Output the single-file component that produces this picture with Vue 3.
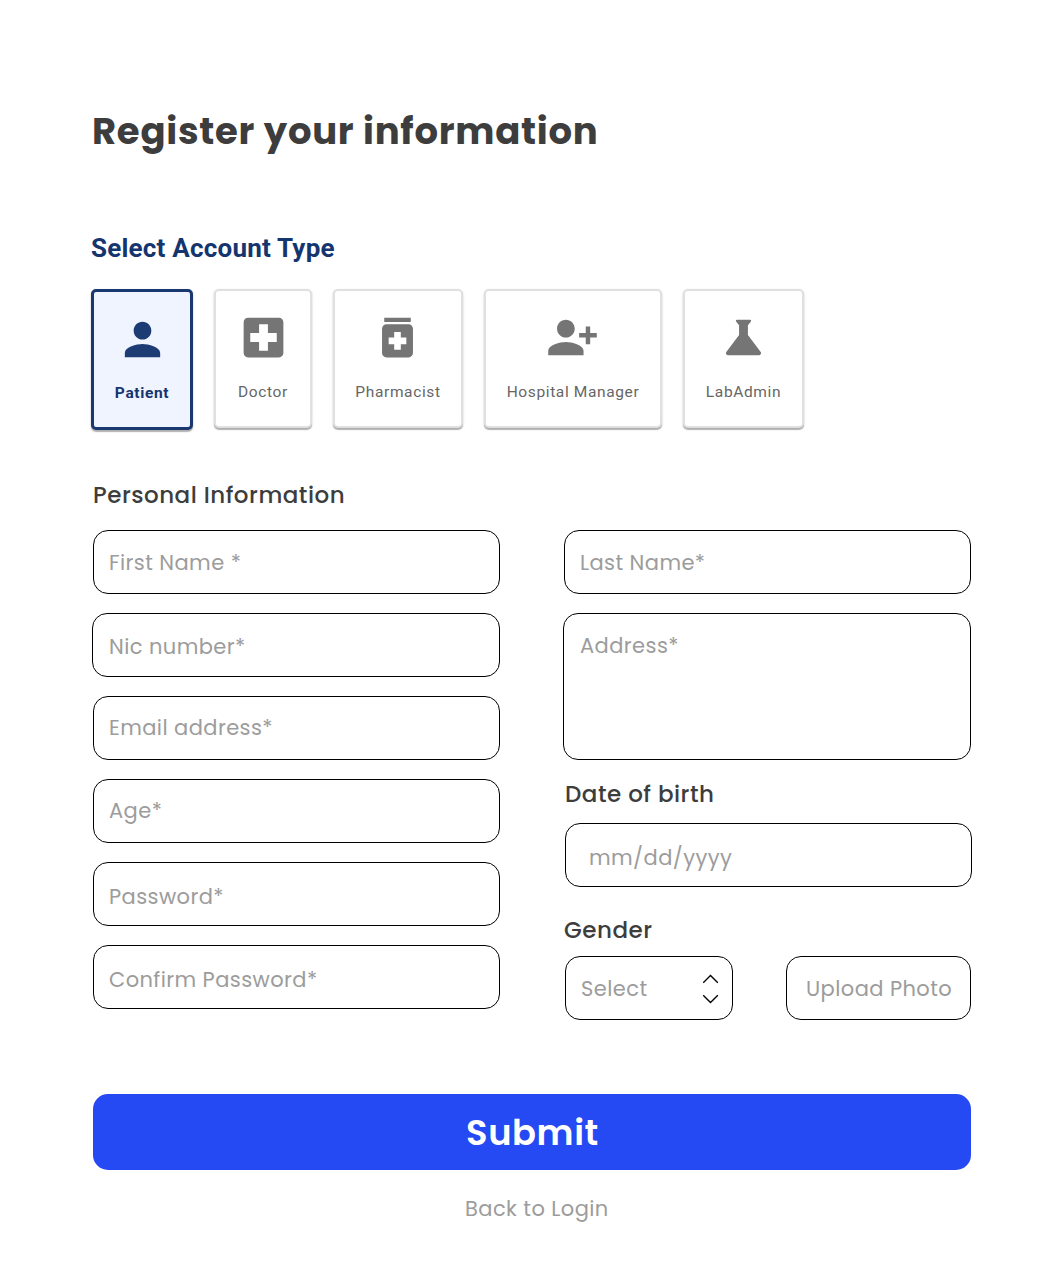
<script setup>
import { ref } from 'vue'

const accountTypes = [
  {
    name: 'Patient', width: 102,
    icon: 'M12 12c2.21 0 4-1.79 4-4s-1.79-4-4-4-4 1.79-4 4 1.79 4 4 4zm0 2c-2.67 0-8 1.34-8 4v2h16v-2c0-2.66-5.33-4-8-4z',
  },
  {
    name: 'Doctor', width: 98,
    icon: 'M19 3H5c-1.1 0-1.99.9-1.99 2L3 19c0 1.1.9 2 2 2h14c1.1 0 2-.9 2-2V5c0-1.1-.9-2-2-2zm-1 11h-4v4h-4v-4H6v-4h4V6h4v4h4v4z',
  },
  {
    name: 'Pharmacist', width: 130,
    icon: 'M6 3h12v2H6zM17 6H7c-1.1 0-2 .9-2 2v11c0 1.1.9 2 2 2h10c1.1 0 2-.9 2-2V8c0-1.1-.9-2-2-2zm-1 9h-2.5v2.5h-3V15H8v-3h2.5V9.5h3V12H16v3z',
  },
  {
    name: 'Hospital Manager', width: 178,
    icon: 'M13 8c0-2.21-1.79-4-4-4S5 5.79 5 8s1.79 4 4 4 4-1.79 4-4zm2 2v2h3v3h2v-3h3v-2h-3V7h-2v3h-3zM1 18v2h16v-2c0-2.66-5.33-4-8-4s-8 1.34-8 4z',
  },
  {
    name: 'LabAdmin', width: 121,
    icon: 'M19.8 18.6 14 10.87V6.5l1.35-1.69c.26-.33.03-.81-.39-.81H9.04c-.42 0-.65.48-.39.81L10 6.5v4.37L4.2 18.6c-.4.6-.02 1.4.7 1.4h14.2c.72 0 1.1-.8.7-1.4z',
  },
]
const selected = ref('Patient')

const leftFields = [
  { label: 'First Name *', cls: 'first' },
  { label: 'Nic number*', cls: 'nic' },
  { label: 'Email address*', cls: 'email' },
  { label: 'Age*', cls: 'age' },
  { label: 'Password*', cls: 'password' },
  { label: 'Confirm Password*', cls: 'confirm' },
]
</script>

<template>
  <main class="page">
    <h1 class="title">Register your information</h1>

    <h2 class="type-heading">Select Account Type</h2>
    <div class="types">
      <button
        v-for="t in accountTypes"
        :key="t.name"
        type="button"
        class="type"
        :class="{ active: t.name === selected }"
        :style="{ width: t.width + 'px' }"
        @click="selected = t.name"
      >
        <svg class="type-icon" viewBox="0 0 24 24"><path :d="t.icon" /></svg>
        <span class="type-name">{{ t.name }}</span>
      </button>
    </div>

    <form class="form" @submit.prevent>
      <section class="column">
        <h3 class="heading personal">Personal Information</h3>
        <div v-for="f in leftFields" :key="f.cls" class="field" :class="f.cls">
          <span>{{ f.label }}</span>
        </div>
      </section>

      <section class="column right">
        <div class="field"><span>Last Name*</span></div>
        <div class="field address"><span>Address*</span></div>
        <h3 class="heading birth">Date of birth</h3>
        <div class="field date"><span>mm/dd/yyyy</span></div>
        <h3 class="heading gender">Gender</h3>
        <div class="row">
          <div class="field select">
            <span>Select</span>
            <svg class="chevrons" viewBox="0 0 16 30">
              <path d="M0.2 8.7 7.5 1.4 14.8 8.7M0.2 21.3 7.5 28.6 14.8 21.3" />
            </svg>
          </div>
          <div class="field upload"><span>Upload Photo</span></div>
        </div>
      </section>
    </form>

    <button type="button" class="submit">Submit</button>
    <a class="back">Back to Login</a>
  </main>
</template>

<style>
body {
  margin: 0;
  background: #fff;
}
</style>

<style scoped>
.page {
  box-sizing: border-box;
  width: 1054px;
  height: 1272px;
  padding: 107px 83px 0 93px;
  display: flex;
  flex-direction: column;
  font-family: Poppins, Inter, sans-serif;
  overflow: hidden;
}
h1, h2, h3 {
  margin: 0;
  white-space: nowrap;
}
.title {
  margin-left: -1px;
  font-size: 37px;
  line-height: 48px;
  font-weight: 700;
  letter-spacing: 0.02em;
  color: #3d3d3d;
}
.type-heading {
  margin: 77px 0 0 -2px;
  font-family: Roboto, sans-serif;
  font-size: 26px;
  line-height: 32px;
  font-weight: 700;
  letter-spacing: 0.22px;
  color: #15356f;
}
.types {
  display: flex;
  align-items: flex-start;
  gap: 21px;
  height: 142px;
  margin: 25px 0 0 -2px;
}
.type {
  box-sizing: border-box;
  flex: none;
  display: flex;
  flex-direction: column;
  align-items: center;
  height: 139px;
  padding: 20px 0 0;
  border: 2px solid #e0e0e0;
  border-radius: 5px;
  background: #fff;
  box-shadow: 0 1.5px 1px rgba(0, 0, 0, 0.26), 0 1px 3px rgba(0, 0, 0, 0.12);
  color: #666;
  font-family: Roboto, sans-serif;
  font-size: 15.5px;
}
.type-icon {
  width: 53px;
  height: 53px;
  margin-right: 1px;
  fill: #757575;
}
.type:nth-child(2) .type-icon {
  margin-right: 0;
}
.type-name {
  margin-top: 16px;
  line-height: 24px;
  letter-spacing: 0.63px;
  white-space: nowrap;
}
.active {
  height: 141px;
  border: 3px solid #1a3870;
  background: #f0f4ff;
  color: #15356f;
  font-weight: 700;
}
.active .type-icon {
  margin: 1px 0 -1px;
  fill: #1e3c74;
}
.form {
  display: flex;
  justify-content: space-between;
  margin-top: 49px;
}
.column {
  display: flex;
  flex-direction: column;
  width: 407px;
}
.right {
  padding-top: 50px;
}
.heading {
  font-size: 23px;
  line-height: 30px;
  font-weight: 500;
  letter-spacing: 0.5px;
  color: #3d3d3d;
}
.personal {
  margin: 0 0 20px 0;
}
.birth {
  margin: 19px 0 14px 1px;
}
.gender {
  margin: 28px 0 11px 0;
}
.field {
  box-sizing: border-box;
  height: 64px;
  padding: 17px 0 0 15px;
  border: 1px solid #000;
  border-radius: 15px;
  color: #9c9c9c;
  font-size: 21px;
  line-height: 30px;
  letter-spacing: 0.02em;
  white-space: nowrap;
}
.field + .field {
  margin-top: 19px;
}
.nic { margin-left: -1px; padding-top: 18px; padding-left: 16px; }
.email, .age { padding-top: 16px; }
.password, .confirm { padding-top: 19px; }
.address { height: 147px; margin-left: -1px; padding-left: 16px; }
.date { margin: 0 -1px 0 1px; padding-top: 19px; padding-left: 23px; }
.row {
  display: flex;
  justify-content: space-between;
  margin-left: 1px;
}
.row .field + .field {
  margin-top: 0;
}
.select {
  display: flex;
  justify-content: space-between;
  width: 168px;
  padding-right: 13px;
}
.chevrons {
  width: 16px;
  height: 30px;
  fill: none;
  stroke: #000;
  stroke-width: 1.4;
}
.upload {
  width: 185px;
  padding-left: 19px;
}
.submit {
  height: 76px;
  margin-top: 74px;
  padding: 2px 0 0 1px;
  border: 0;
  border-radius: 15px;
  background: #2549f2;
  color: #fff;
  font: 600 35.3px/74px Poppins, Inter, sans-serif;
  letter-spacing: 0.6px;
}
.back {
  margin: 24px 0 0 372px;
  font-size: 21px;
  line-height: 30px;
  letter-spacing: 0.02em;
  color: #9c9c9c;
}
</style>
